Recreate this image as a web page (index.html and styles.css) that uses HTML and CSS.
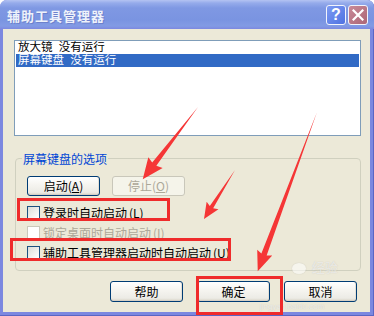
FILE: index.html
```html
<!DOCTYPE html>
<html lang="zh">
<head>
<meta charset="utf-8">
<title>辅助工具管理器</title>
<link rel="stylesheet" href="styles.css">
</head>
<body>
<div class="window">
  <div class="titlebar">
    <span class="title">辅助工具管理器</span>
    <div class="caption">
      <span class="cbtn help">?</span>
      <span class="cbtn close"><svg width="12" height="12" viewBox="0 0 12 12"><path d="M1.5 1.5 L10.5 10.5 M10.5 1.5 L1.5 10.5" stroke="#fff" stroke-width="2.2" stroke-linecap="square"/></svg></span>
    </div>
  </div>
  <div class="client">
    <div class="listbox">
      <div class="item">放大镜 没有运行</div>
      <div class="item selected">屏幕键盘 没有运行</div>
    </div>
    <fieldset class="group">
      <legend>屏幕键盘的选项</legend>
      <div class="gcontent">
        <div class="btnrow">
          <button class="btn small">启动(<u>A</u>)</button>
          <button class="btn small disabled">停止(<u>O</u>)</button>
        </div>
        <div class="checks">
          <div class="check"><span class="box"></span><span>登录时自动启动<span class="key">(<u>L</u>)</span></span></div>
          <div class="check disabled"><span class="box"></span><span>锁定桌面时自动启动<span class="key">(<u>I</u>)</span></span></div>
          <div class="check"><span class="box"></span><span>辅助工具管理器启动时自动启动<span class="key">(<u>U</u>)</span></span></div>
        </div>
      </div>
    </fieldset>
    <div class="footer">
      <button class="btn">帮助</button>
      <button class="btn">确定</button>
      <button class="btn">取消</button>
    </div>
  </div>
  <div class="watermark">
    <span class="wm-paw"></span>
    <span class="wm-jy">经验</span>
    <span class="wm-url">jingyan.baidu.com</span>
  </div>
  <svg class="annot" width="374" height="316" viewBox="0 0 374 316">
    <g fill="none" stroke="#EF2B2B" stroke-width="3">
      <rect x="18.5" y="199.5" width="150" height="20"/>
      <rect x="11.5" y="239.5" width="218" height="20"/>
      <rect x="197.5" y="277.5" width="84" height="36"/>
    </g>
    <g fill="#F53636">
      <polygon transform="translate(198,107) rotate(127.4)" points="0,0 72,-2.6 70,-9 91,0 70,9 72,2.6"/>
      <polygon transform="translate(235,170) rotate(122.3)" points="0,0 44,-2 42,-7 58,0 42,7 44,2"/>
      <polygon transform="translate(317,112) rotate(110.4)" points="0,0 152,-2.8 150,-8 170,0 150,8 152,2.8"/>
    </g>
  </svg>
</div>
</body>
</html>
```

FILE: styles.css
```css
* { box-sizing: border-box; }

body {
  margin: 0;
  background: #ffffff;
  font-family: "Noto Sans CJK SC", "Liberation Sans", sans-serif;
  font-size: 12px;
  color: #000;
}

.window {
  position: relative;
  width: 374px;
  height: 316px;
  display: flex;
  flex-direction: column;
  border-radius: 7px 7px 0 0;
  overflow: hidden;
  background: #7C88E0;
  box-shadow: inset -1px 0 0 #5A66C4, inset 0 -1px 0 #5A66C4;
}

.titlebar {
  flex: none;
  height: 29px;
  display: flex;
  align-items: center;
  padding: 0 6px 0 7px;
  background: linear-gradient(#B4C3F2 0, #95ABEB 3px, #7F98E3 8px, #7A94E1 20px, #829BE4 26px, #7C88E0 29px);
}

.title {
  flex: 1;
  font-size: 13px;
  font-weight: bold;
  letter-spacing: 1px;
  color: #EEF2FB;
  line-height: 14px;
  margin-top: 2px;
  text-shadow: 1px 1px 0 #6C80CC;
}

.caption {
  display: flex;
  gap: 2px;
  margin-top: 1px;
}

.cbtn {
  width: 20px;
  height: 20px;
  border: 1px solid #F2F4FC;
  border-radius: 3px;
  display: flex;
  align-items: center;
  justify-content: center;
}

.help {
  background: linear-gradient(135deg, #7C9AF2, #4F72E2);
  color: #fff;
  font-family: "Liberation Sans", sans-serif;
  font-weight: bold;
  font-size: 16px;
  line-height: 16px;
}

.close {
  background: linear-gradient(135deg, #C98A98, #AC6676);
}

.client {
  flex: 1;
  margin: 0 4px 4px 3px;
  background: #ECE9D8;
  display: flex;
  flex-direction: column;
}

.listbox {
  margin: 11px 0 0 11px;
  width: 347px;
  height: 96px;
  border: 1px solid #7F9DB9;
  background: #fff;
  padding: 0 1px;
}

.item {
  height: 13px;
  line-height: 13px;
  padding-left: 2px;
  white-space: nowrap;
  word-spacing: 3px;
  font-family: "Liberation Sans", "Noto Sans CJK SC", sans-serif;
  font-size: 11.5px;
  overflow: hidden;
}

.item.selected {
  background: #316AC5;
  color: #fff;
}

.group {
  margin: 16px 0 0 12px;
  width: 346px;
  border: 1px solid #D0D0BF;
  border-radius: 4px;
  padding: 0 0 8px 0;
  min-width: 0;
}

.group legend {
  margin-left: 6px;
  padding: 0 1px;
  line-height: 13px;
  font-size: 12px;
  color: #0046D5;
}

.gcontent {
  padding: 11px 0 0 11px;
}

.btnrow {
  display: flex;
  gap: 12px;
}

.btn {
  width: 73px;
  height: 21px;
  padding: 0;
  font-family: inherit;
  font-size: 12px;
  line-height: 12px;
  color: #000;
  border: 1px solid #003C74;
  border-radius: 3px;
  background: linear-gradient(#FFFFFF 0%, #F6F5F1 40%, #ECEBE5 85%, #D8D3C6 100%);
  box-shadow: inset 0 -1px 0 #D6D0C5, inset -1px 0 0 #E3E0D6;
}

.btn.small {
  height: 20px;
}

.btn u {
  text-underline-offset: 1px;
}

.btn.disabled {
  border-color: #C9C7BA;
  background: #F5F4EA;
  box-shadow: none;
  color: #ACA899;
}

.checks {
  margin-top: 6px;
  display: flex;
  flex-direction: column;
}

.check {
  height: 20px;
  display: flex;
  align-items: center;
  gap: 3px;
  white-space: nowrap;
}

.key {
  margin-left: 2px;
}

.box {
  width: 13px;
  height: 13px;
  flex: none;
  border: 1px solid #1C5180;
  background: linear-gradient(135deg, #DCDCD7, #FFFFFF);
}

.check.disabled {
  color: #ACA899;
}

.check.disabled .box {
  border-color: #CAC8BB;
  background: #fff;
}

.footer {
  margin-top: 10px;
  display: flex;
  justify-content: flex-end;
  gap: 14px;
  padding-right: 13px;
}

.watermark {
  position: absolute;
  left: 252px;
  top: 258px;
  width: 110px;
  height: 56px;
  pointer-events: none;
  color: rgba(255, 255, 255, 0.6);
  text-shadow: 0 0 1px rgba(150, 150, 150, 0.45);
}

.wm-paw {
  position: absolute;
  left: 40px;
  top: 5px;
  width: 14px;
  height: 11px;
  border-radius: 50%;
  background: rgba(255, 255, 255, 0.55);
  box-shadow: 0 0 1px rgba(150, 150, 150, 0.5);
}

.wm-jy {
  position: absolute;
  left: 60px;
  top: 2px;
  font-size: 13px;
  line-height: 14px;
}

.wm-url {
  position: absolute;
  left: 8px;
  top: 44px;
  font-family: "Liberation Sans", sans-serif;
  font-size: 8px;
  line-height: 9px;
}

.annot {
  position: absolute;
  left: 0;
  top: 0;
  pointer-events: none;
}
```
